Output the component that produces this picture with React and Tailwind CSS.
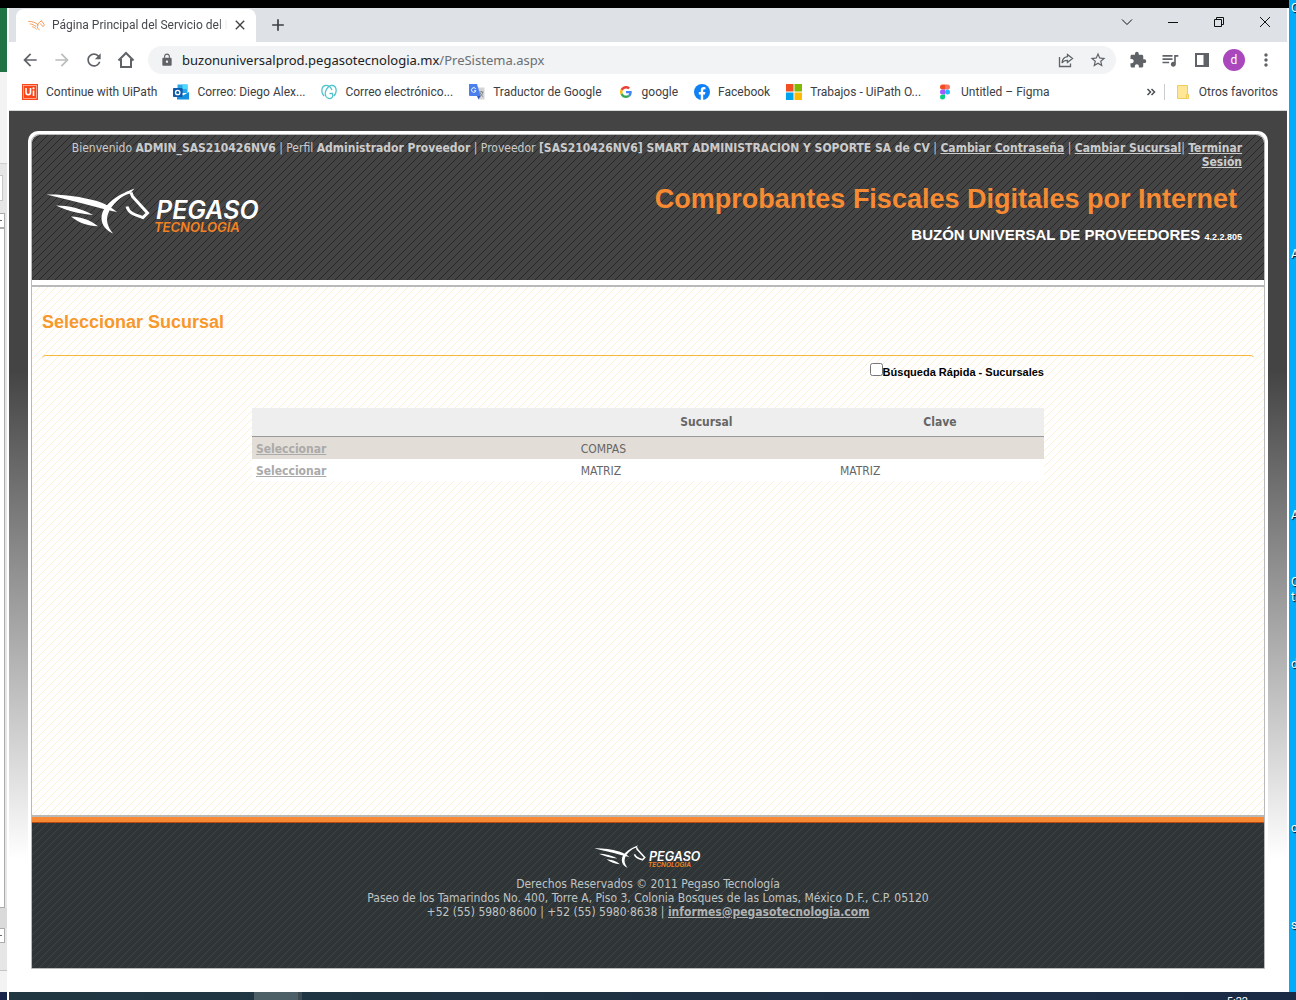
import React from "react";
import {
  MdArrowBack,
  MdArrowForward,
  MdRefresh,
  MdLock,
  MdStarBorder,
  MdExtension,
  MdQueueMusic,
  MdMoreVert,
  MdClose,
  MdAdd,
} from "react-icons/md";

const HorseMark = ({ color = "#fff" }) => (
  <g fill={color}>
    <path d="M0.5 8.5C16 8 34 10.500 50 14.800C58 17 65 21 71 26C64 24.500 58 23 52 21.500C36 17 18 13 0.5 8.500Z" />
    <path d="M10 19.500C22 19.500 36 22.500 47 29C34 28 22 25 10 19.500Z" />
    <path d="M25 30.500C34 31 44 33.500 52 40.300C42 40 33 37 25 30.500Z" />
    <path d="M88.500 2.500C76 7 56 17 55.500 32C55.500 39 60 44.500 67 47.500C61 40 60 34 62 28C65 19 76 9 84 7.500Z" />
    <path
      d="M85 6.500L86.500 10.500L101.500 27L97 31.500C92 29.500 83 28.500 81 20.500"
      fill="none"
      stroke={color}
      strokeWidth="3"
    />
  </g>
);

const Logo = ({ className }) => (
  <svg viewBox="0 0 216 50" className={className} role="img" aria-label="Pegaso Tecnología">
    <HorseMark />
    <text x="110" y="33" fill="#fff" className="font-[Inter,sans-serif] text-[25px] font-semibold italic">
      PEGASO
    </text>
    <text x="108" y="46" fill="#f58220" className="font-[Inter,sans-serif] text-[13px] font-semibold italic">
      TECNOLOGÍA
    </text>
  </svg>
);

const HomeIcon = () => (
  <svg viewBox="0 0 18 18" className="size-[18px]" fill="none" stroke="#5f6368" strokeWidth="2">
    <path d="M1.500 9.500L9 2L16.500 9.500M4 8V16H14V8" />
  </svg>
);

const ShareIcon = () => (
  <svg viewBox="0 0 16 16" className="size-4" fill="none" stroke="#5f6368" strokeWidth="1.3">
    <path d="M1.500 5V14.500H12.500V11.500" />
    <path d="M9.500 2.500L14.500 6.500L9.500 10.500V8.300C7 8.200 5.300 9 4 11C4.300 7.500 6.300 5 9.500 4.700Z" />
  </svg>
);

const PanelIcon = () => (
  <svg viewBox="0 0 14 14" className="size-3.5">
    <path d="M0 0H14V14H0ZM2 2V12H8.500V2Z" fill="#5f6368" fillRule="evenodd" />
  </svg>
);

const icons = {
  uipath: (
    <svg viewBox="0 0 16 16" className="size-4">
      <rect width="16" height="16" fill="#fa4616" />
      <rect x="1.500" y="1.500" width="13" height="13" fill="none" stroke="#fff" strokeWidth="0.500" />
      <path d="M4 4V8.500A2.200 2.200 0 0 0 8.500 8.500V4M11.500 6.500V12" stroke="#fff" strokeWidth="1.600" fill="none" />
      <circle cx="11.500" cy="4.300" r="1.100" fill="#fff" />
    </svg>
  ),
  outlook: (
    <svg viewBox="0 0 16 16" className="size-4">
      <path d="M4.500 0.500H14.500V9H4.500Z" fill="#28a8ea" />
      <path d="M9.500 0.500H14.500V5H9.500Z" fill="#50d9ff" />
      <path d="M4.500 5H9.500V9H4.500Z" fill="#0364b8" />
      <path d="M4 8L10 11.500L16 8V15.500H4Z" fill="#1490df" />
      <rect y="4" width="9.500" height="9" rx="0.800" fill="#0f5ba8" />
      <circle cx="4.700" cy="8.500" r="2.200" fill="none" stroke="#fff" strokeWidth="1.300" />
    </svg>
  ),
  godaddy: (
    <svg viewBox="0 0 16 16" className="size-4" fill="none" stroke="#4fc3cb" strokeWidth="1.300">
      <path d="M3 12C-0.500 8 0.500 2 4.500 1.500C7.500 1.200 10 4 11 6" />
      <path d="M13 12C16.500 8 15.500 2 11.500 1.500C7 1 2.500 8 5 12.500C6.500 15 9.500 15 11 13.500C12 12.300 12 11 11.500 9.500H8.500" />
    </svg>
  ),
  translate: (
    <svg viewBox="0 0 16 16" className="size-4">
      <path d="M6 3.500H15.500V15.500H10Z" fill="#d5d5d5" />
      <path d="M0 0H8L11.500 12H1A1 1 0 0 1 0 11Z" fill="#4a80ee" />
      <path d="M8 12H11.500L9.500 15.500Z" fill="#2a56c6" />
      <path d="M6.800 4.800A2.300 2.300 0 1 0 7 6.800H5" stroke="#fff" fill="none" />
      <path d="M10 8H14.500M12.300 6.800V8M13.800 8C13.500 10 12.500 11.500 11 12.500M11.200 9C12 11 13 12 14.300 12.700" stroke="#6b7780" strokeWidth="0.800" fill="none" />
    </svg>
  ),
  google: (
    <svg viewBox="0 0 48 48" className="size-3">
      <path fill="#EA4335" d="M24 9.500c3.540 0 6.710 1.220 9.210 3.600l6.850-6.850C35.900 2.380 30.470 0 24 0 14.620 0 6.510 5.380 2.560 13.220l7.980 6.190C12.430 13.720 17.740 9.500 24 9.500z" />
      <path fill="#4285F4" d="M46.980 24.550c0-1.570-.15-3.090-.38-4.550H24v9.020h12.940c-.58 2.960-2.260 5.480-4.780 7.180l7.730 6c4.510-4.180 7.090-10.360 7.090-17.650z" />
      <path fill="#FBBC05" d="M10.530 28.590c-.48-1.450-.76-2.990-.76-4.590s.27-3.140.76-4.590l-7.980-6.190C.92 16.460 0 20.120 0 24c0 3.880.92 7.540 2.560 10.780l7.970-6.190z" />
      <path fill="#34A853" d="M24 48c6.480 0 11.930-2.130 15.890-5.810l-7.730-6c-2.150 1.450-4.920 2.300-8.160 2.300-6.260 0-11.570-4.220-13.470-9.910l-7.980 6.190C6.510 42.620 14.620 48 24 48z" />
    </svg>
  ),
  facebook: (
    <svg viewBox="0 0 16 16" className="size-4">
      <circle cx="8" cy="8" r="8" fill="#1080f5" />
      <path d="M6.800 16V10.400H4.800V8H6.800V6.300C6.800 4.200 8 3.100 9.800 3.100L11.500 3.250V5.200H10.500C9.500 5.200 9.200 5.800 9.200 6.500V8H11.400L11 10.400H9.200V16Z" fill="#fff" />
    </svg>
  ),
  microsoft: (
    <svg viewBox="0 0 16 16" className="size-4">
      <rect width="7.500" height="7.500" fill="#f25022" />
      <rect x="8.500" width="7.500" height="7.500" fill="#7fba00" />
      <rect y="8.500" width="7.500" height="7.500" fill="#00a4ef" />
      <rect x="8.500" y="8.500" width="7.500" height="7.500" fill="#ffb900" />
    </svg>
  ),
  figma: (
    <svg viewBox="0 0 16 16" className="size-4">
      <path d="M8 0.500H5.500A2.500 2.500 0 0 0 5.500 5.500H8Z" fill="#f24e1e" />
      <path d="M8 0.500H10.500A2.500 2.500 0 0 1 10.500 5.500H8Z" fill="#ff7262" />
      <path d="M8 5.500H5.500A2.500 2.500 0 0 0 5.500 10.500H8Z" fill="#a259ff" />
      <circle cx="10.500" cy="8" r="2.500" fill="#1abcfe" />
      <path d="M8 10.500H5.500A2.500 2.500 0 1 0 8 13Z" fill="#0acf83" />
    </svg>
  ),
};

const bookmarks = [
  ["uipath", "Continue with UiPath"],
  ["outlook", "Correo: Diego Alex..."],
  ["godaddy", "Correo electrónico..."],
  ["translate", "Traductor de Google"],
  ["google", "google"],
  ["facebook", "Facebook"],
  ["microsoft", "Trabajos - UiPath O..."],
  ["figma", "Untitled – Figma"],
];

const ToolButton = ({ label, children }) => (
  <button type="button" aria-label={label} className="flex h-7 w-8 shrink-0 items-center justify-center text-[#5f6368]">
    {children}
  </button>
);

const WindowButton = ({ label, children }) => (
  <button type="button" aria-label={label} className="flex h-7 w-[46px] items-center justify-center">
    <svg viewBox="0 0 12 12" className="size-3" fill="none" stroke="#111" strokeWidth="1">
      {children}
    </svg>
  </button>
);

const TabStrip = () => (
  <div className="flex h-[34px] items-end bg-[#dee1e6] pl-[7px]">
    <div className="flex h-[33px] w-60 items-center rounded-t-lg bg-white pr-2 pb-0.5 pl-3 text-xs text-[#45494d]">
      <svg viewBox="0 0 106 70" className="h-4 w-[17px] shrink-0" fill="none" stroke="#ee8433" strokeWidth="5">
        <path d="M2 12C28 12 48 20 66 36M12 28C26 30 38 36 50 44M26 46C36 48 46 54 54 62" />
        <path d="M86 8C68 18 56 32 58 46C60 56 64 62 72 66M84 8L102 34L96 44C88 42 80 36 80 26" />
      </svg>
      <span className="ml-[7px] w-[175px] overflow-hidden mask-r-from-95% whitespace-nowrap">
        Página Principal del Servicio del B
      </span>
      <button type="button" aria-label="Cerrar pestaña" className="ml-auto text-[#3c4043]">
        <MdClose className="size-4" />
      </button>
    </div>
    <button type="button" aria-label="Nueva pestaña" className="ml-3 flex h-[33px] items-center pb-0.5 text-[#3c4043]">
      <MdAdd className="size-5" />
    </button>
    <div className="-mr-px ml-auto flex self-start">
      <WindowButton label="Buscar pestañas">
        <path d="M1 3.500L6 8.500L11 3.500" />
      </WindowButton>
      <WindowButton label="Minimizar">
        <path d="M1 6.500H11" />
      </WindowButton>
      <WindowButton label="Restaurar">
        <path d="M1.500 3.500H8.500V10.500H1.500ZM3.500 3.500V1.500H10.500V8.500H8.500" />
      </WindowButton>
      <WindowButton label="Cerrar">
        <path d="M1 1L11 11M11 1L1 11" />
      </WindowButton>
    </div>
  </div>
);

const Toolbar = () => (
  <div className="flex h-9 items-center bg-white px-[5px]">
    <ToolButton label="Atrás"><MdArrowBack className="size-5" /></ToolButton>
    <ToolButton label="Adelante"><MdArrowForward className="size-5 text-[#babcbe]" /></ToolButton>
    <ToolButton label="Recargar"><MdRefresh className="size-5" /></ToolButton>
    <ToolButton label="Inicio"><HomeIcon /></ToolButton>
    <div className="mx-1.5 flex h-7 flex-1 items-center rounded-full bg-[#f1f3f4] pr-0.5 pl-3">
      <MdLock className="size-3.5 text-[#5f6368]" />
      <a href="#url" className="ml-2 flex-1 pt-0.5 font-['Noto_Sans',sans-serif] text-[13px] text-[#202124]">
        buzonuniversalprod.pegasotecnologia.mx<span className="text-[#6b6f74]">/PreSistema.aspx</span>
      </a>
      <ToolButton label="Compartir"><ShareIcon /></ToolButton>
      <ToolButton label="Favorito"><MdStarBorder className="size-[18px]" /></ToolButton>
    </div>
    <ToolButton label="Extensiones"><MdExtension className="size-[18px]" /></ToolButton>
    <ToolButton label="Multimedia"><MdQueueMusic className="size-5" /></ToolButton>
    <ToolButton label="Panel lateral"><PanelIcon /></ToolButton>
    <ToolButton label="Perfil">
      <span className="flex size-[22px] items-center justify-center rounded-full bg-[#ab47bc] text-xs text-white">d</span>
    </ToolButton>
    <ToolButton label="Menú"><MdMoreVert className="size-5" /></ToolButton>
  </div>
);

const Bookmarks = () => (
  <nav className="flex h-[33px] items-start gap-4 border-b border-[#d5dad8] bg-white pr-[9px] pl-[13px] text-xs whitespace-nowrap text-[#3c4043]">
    {bookmarks.map(([icon, label]) => (
      <a key={icon} href={"#" + icon} className="flex h-7 items-center gap-2">
        <span className="flex w-4 justify-center">{icons[icon]}</span>
        {label}
      </a>
    ))}
    <button type="button" aria-label="Más marcadores" className="ml-auto flex h-7 items-center">
      <svg viewBox="0 0 10 8" className="h-2 w-2.5" fill="none" stroke="#4b4f53" strokeWidth="1.500">
        <path d="M1.500 1L4.500 4L1.500 7M5.500 1L8.500 4L5.500 7" />
      </svg>
    </button>
    <a href="#otros" className="flex h-7 items-center gap-2">
      <span className="-ml-2 h-4 w-px bg-[#c9ccd0]" />
      <svg viewBox="0 0 16 16" className="ml-0.5 size-4">
        <path d="M2.500 1.500H12.500V14.500H2.500Z" fill="#ffe797" stroke="#f0cd5a" />
        <path d="M11.500 10.500H13.500V14.500H11.500Z" fill="#ffe797" stroke="#f0cd5a" />
      </svg>
      Otros favoritos
    </a>
  </nav>
);

const SiteHeader = () => (
  <header className="h-[145px] rounded-t-lg bg-[#444] bg-[linear-gradient(135deg,transparent_45%,#282828_45%,#282828_55%,transparent_55%)] bg-size-[8px_8px] pt-1.5 text-[#ccc]">
    <p className="pr-[22px] text-right leading-[14px]">
      Bienvenido <b>ADMIN_SAS210426NV6</b> | Perfil <b>Administrador Proveedor</b> | Proveedor{" "}
      <b>[SAS210426NV6] SMART ADMINISTRACION Y SOPORTE SA de CV</b> |{" "}
      <a href="#clave" className="font-bold underline">Cambiar Contraseña</a> |{" "}
      <a href="#sucursal" className="font-bold underline">Cambiar Sucursal</a>|{" "}
      <a href="#salir" className="font-bold underline">Terminar<br />Sesión</a>
    </p>
    <div className="flex items-start justify-between">
      <Logo className="mt-[17px] ml-3.5 h-[50px] w-[216px]" />
      <div className="pt-3.5 pr-[22px] text-right font-['Liberation_Sans',Arial,sans-serif] font-bold">
        <h1 className="pr-[5px] text-[27px] leading-8 text-[#f68b33]">Comprobantes Fiscales Digitales por Internet</h1>
        <p className="mt-2.5 text-[15px] leading-5 text-white">
          BUZÓN UNIVERSAL DE PROVEEDORES <span className="text-[9px]">4.2.2.805</span>
        </p>
      </div>
    </div>
  </header>
);

const rows = [
  { sucursal: "COMPAS", clave: "", bg: "bg-[#e2ddd6]" },
  { sucursal: "MATRIZ", clave: "MATRIZ", bg: "bg-white" },
];

const Content = () => (
  <main className="flex-1 border-y-2 border-[#b9b9b9] bg-white bg-[linear-gradient(135deg,transparent_45%,#fdeed6_45%,#fdeed6_55%,transparent_55%)] bg-size-[8px_8px] px-2.5 pt-[23px]">
    <h2 className="font-['Liberation_Sans',Arial,sans-serif] text-lg leading-6 font-bold text-[#f7982d]">Seleccionar Sucursal</h2>
    <div className="mt-[21px] h-2 rounded-t-sm border-t border-[#f5b83d]" />
    <div className="mx-auto w-full max-w-[792px]">
      <label className="flex items-start justify-end font-['Liberation_Sans',Arial,sans-serif] text-[11px] leading-[18px] font-bold text-black">
        <input type="checkbox" className="size-[13px]" />
        Búsqueda Rápida - Sucursales
      </label>
      <table className="mt-[27px] w-full table-fixed text-left leading-[14px] text-[#666]">
        <thead>
          <tr className="h-7 border-b border-[#999] bg-[#eee]">
            <th className="w-[41%]" aria-label="Acción" />
            <th className="text-center">Sucursal</th>
            <th className="w-[208px] text-center">Clave</th>
          </tr>
        </thead>
        <tbody>
          {rows.map((r) => (
            <tr key={r.sucursal} className={r.bg}>
              <td className="px-1 pt-[5px] pb-[3px]">
                <a href={"#" + r.sucursal} className="font-bold text-[#aaa] underline">Seleccionar</a>
              </td>
              <td className="px-1 pt-[5px] pb-[3px]">{r.sucursal}</td>
              <td className="px-1 pt-[5px] pb-[3px]">{r.clave}</td>
            </tr>
          ))}
        </tbody>
      </table>
    </div>
  </main>
);

const SiteFooter = () => (
  <footer className="h-[151px] border-t-[5px] border-[#f98a35] text-center leading-[14px] text-[#c0c4c4]">
    <div className="h-full border-t border-[#b84a12] bg-[#2f3436] bg-[linear-gradient(135deg,transparent_45%,#404546_45%,#404546_55%,transparent_55%)] bg-size-[8px_8px] pt-[21px]">
      <Logo className="mx-auto h-[25px] w-[108px]" />
      <p className="mt-2">Derechos Reservados © 2011 Pegaso Tecnología</p>
      <p>Paseo de los Tamarindos No. 400, Torre A, Piso 3, Colonia Bosques de las Lomas, México D.F., C.P. 05120</p>
      <p>
        +52 (55) 5980·8600 | +52 (55) 5980·8638 |{" "}
        <a href="mailto:informes@pegasotecnologia.com" className="font-bold text-[#b0b2b2] underline">informes@pegasotecnologia.com</a>
      </p>
    </div>
  </footer>
);

const LeftWindow = () => (
  <div className="flex w-[7px] flex-col overflow-hidden bg-[#e6e6e6]">
    <div className="h-16 bg-[#217346]" />
    <div className="h-[92px] border-b border-[#cfcfcf] bg-[#f3f3f3]" />
    <div className="mt-[11px] h-[26px] w-[3px] border border-l-0 border-[#c6c6c6] bg-white" />
    <div className="mt-3 h-[15px] w-[5px] border border-l-0 border-[#ababab] bg-white pt-1.5">
      <div className="h-px w-0.5 bg-[#666]" />
    </div>
    <div className="w-[5px] flex-1 border border-l-0 border-[#ababab] bg-white" />
    <div className="h-5 bg-[#dadada]" />
    <div className="h-[15px] w-[5px] border border-l-0 border-[#ababab] bg-white pt-1.5">
      <div className="h-px w-0.5 bg-[#666]" />
    </div>
    <div className="mt-[27px] h-[22px] border-t border-[#c6c6c6] bg-[#f3f3f3]" />
  </div>
);

const desktopLabels = [
  ["C", "top-0"],
  ["A", "top-[246px]"],
  ["A", "top-[507px]"],
  ["C", "top-[574px]"],
  ["t", "top-[589px]"],
  ["d", "top-[656px]"],
  ["c", "top-[820px]"],
  ["s", "top-[917px]"],
];

const Desktop = () => (
  <div className="relative w-[7px] overflow-hidden bg-[#00adfd] text-xs leading-4 text-white text-shadow-[1px_1px_1px_#000]">
    {desktopLabels.map(([letter, top]) => (
      <span key={top} className={"absolute left-0.5 " + top}>{letter}</span>
    ))}
  </div>
);

export default function App() {
  return (
    <div className="flex min-h-screen flex-col bg-white font-[Roboto,sans-serif]">
      <div className="flex flex-1">
        <div className="flex flex-1 flex-col">
          <div className="h-2 bg-black" />
          <div className="flex flex-1">
            <LeftWindow />
            <div className="mx-0.5 flex flex-1 flex-col">
              <TabStrip />
              <Toolbar />
              <Bookmarks />
              <div className="flex flex-1 flex-col bg-[linear-gradient(to_bottom,#444_260px,#fff_748px)] px-[19px] pt-5 pb-[23px] font-['DejaVu_Sans_Condensed','DejaVu_Sans',sans-serif] text-xs">
                <div className="flex flex-1 flex-col rounded-t-[10px] bg-white px-[3px] pt-[3px]">
                  <div className="flex flex-1 flex-col rounded-t-lg border border-[#b9b9b9]">
                    <SiteHeader />
                    <div className="h-[5px] bg-white" />
                    <Content />
                    <SiteFooter />
                  </div>
                </div>
              </div>
            </div>
          </div>
        </div>
        <Desktop />
      </div>
      <div className="flex h-2 overflow-hidden bg-linear-to-r from-[#213842] to-[#1b2a45]">
        <div className="w-[7px] bg-[#18244a]" />
        <div className="w-0.5 bg-white" />
        <div className="ml-[245px] w-11 bg-[#4d5f67]" />
        <div className="w-1 bg-[#3c4a52]" />
        <span className="mt-1 mr-12 ml-auto text-[11px] leading-3 text-white">5:22</span>
      </div>
    </div>
  );
}
